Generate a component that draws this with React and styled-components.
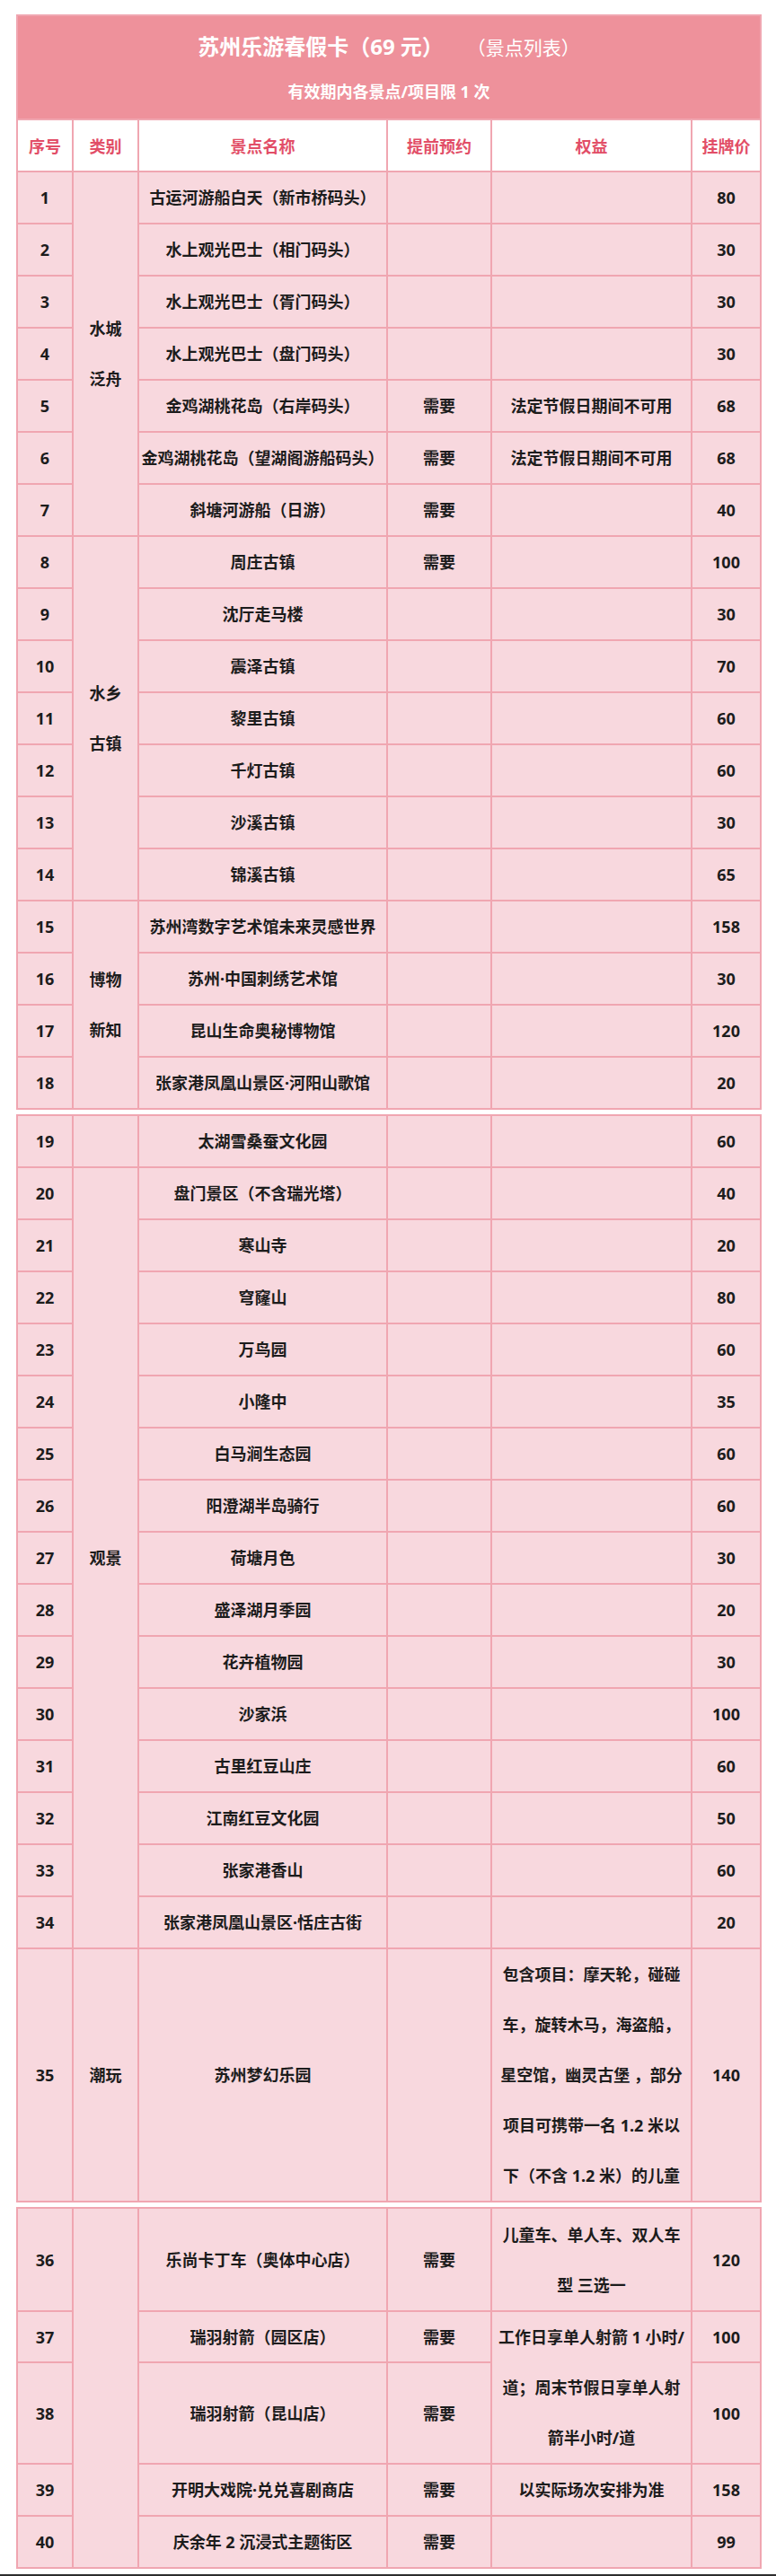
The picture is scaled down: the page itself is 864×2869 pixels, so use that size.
import styled, { createGlobalStyle } from 'styled-components'

const blocoUm = [
    { n: 1, cat: ["水城", "泛舟"], span: 7, nome: "古运河游船白天（新市桥码头）", preco: 80 },
    { n: 2, nome: "水上观光巴士（相门码头）", preco: 30 },
    { n: 3, nome: "水上观光巴士（胥门码头）", preco: 30 },
    { n: 4, nome: "水上观光巴士（盘门码头）", preco: 30 },
    { n: 5, nome: "金鸡湖桃花岛（右岸码头）", reserva: "需要", direito: ["法定节假日期间不可用"], preco: 68 },
    { n: 6, nome: "金鸡湖桃花岛（望湖阁游船码头）", reserva: "需要", direito: ["法定节假日期间不可用"], preco: 68 },
    { n: 7, nome: "斜塘河游船（日游）", reserva: "需要", preco: 40 },
    { n: 8, cat: ["水乡", "古镇"], span: 7, nome: "周庄古镇", reserva: "需要", preco: 100 },
    { n: 9, nome: "沈厅走马楼", preco: 30 },
    { n: 10, nome: "震泽古镇", preco: 70 },
    { n: 11, nome: "黎里古镇", preco: 60 },
    { n: 12, nome: "千灯古镇", preco: 60 },
    { n: 13, nome: "沙溪古镇", preco: 30 },
    { n: 14, nome: "锦溪古镇", preco: 65 },
    { n: 15, cat: ["博物", "新知"], span: 4, nome: "苏州湾数字艺术馆未来灵感世界", preco: 158 },
    { n: 16, nome: "苏州·中国刺绣艺术馆", preco: 30 },
    { n: 17, nome: "昆山生命奥秘博物馆", preco: 120 },
    { n: 18, nome: "张家港凤凰山景区·河阳山歌馆", preco: 20 },
]

const blocoDois = [
    { n: 19, cat: [], span: 1, nome: "太湖雪桑蚕文化园", preco: 60 },
    { n: 20, cat: ["观景"], span: 15, nome: "盘门景区（不含瑞光塔）", preco: 40 },
    { n: 21, nome: "寒山寺", preco: 20 },
    { n: 22, nome: "穹窿山", preco: 80 },
    { n: 23, nome: "万鸟园", preco: 60 },
    { n: 24, nome: "小隆中", preco: 35 },
    { n: 25, nome: "白马涧生态园", preco: 60 },
    { n: 26, nome: "阳澄湖半岛骑行", preco: 60 },
    { n: 27, nome: "荷塘月色", preco: 30 },
    { n: 28, nome: "盛泽湖月季园", preco: 20 },
    { n: 29, nome: "花卉植物园", preco: 30 },
    { n: 30, nome: "沙家浜", preco: 100 },
    { n: 31, nome: "古里红豆山庄", preco: 60 },
    { n: 32, nome: "江南红豆文化园", preco: 50 },
    { n: 33, nome: "张家港香山", preco: 60 },
    { n: 34, nome: "张家港凤凰山景区·恬庄古街", preco: 20 },
    {
        n: 35, cat: ["潮玩"], span: 1, nome: "苏州梦幻乐园", altura: 282, preco: 140,
        direito: ["包含项目：摩天轮，碰碰", "车，旋转木马，海盗船，", "星空馆，幽灵古堡 ，部分", "项目可携带一名 1.2 米以", "下（不含 1.2 米）的儿童"],
    },
]

const blocoTres = [
    { n: 36, cat: [], span: 5, nome: "乐尚卡丁车（奥体中心店）", reserva: "需要", altura: 115, direito: ["儿童车、单人车、双人车", "型 三选一"], preco: 120 },
    { n: 37, nome: "瑞羽射箭（园区店）", reserva: "需要", altura: 57, direito: ["工作日享单人射箭 1 小时/", "道；周末节假日享单人射", "箭半小时/道"], dSpan: 2, preco: 100 },
    { n: 38, nome: "瑞羽射箭（昆山店）", reserva: "需要", altura: 113, pulaDireito: true, preco: 100 },
    { n: 39, nome: "开明大戏院·兑兑喜剧商店", reserva: "需要", altura: 57, direito: ["以实际场次安排为准"], preco: 158 },
    { n: 40, nome: "庆余年 2 沉浸式主题街区", reserva: "需要", altura: 58, preco: 99 },
]

function Colunas() {
    return (
        <colgroup>
            <col style={{ width: 62 }} />
            <col style={{ width: 73 }} />
            <col style={{ width: 277 }} />
            <col style={{ width: 116 }} />
            <col style={{ width: 223 }} />
            <col style={{ width: 77 }} />
        </colgroup>
    )
}

function Linhas({ text }) {
    return text.map((t, i) => (
        <span key={i}>{i > 0 && <br />}{t}</span>
    ))
}

function Linha({ item }) {
    return (
        <Row $h={item.altura || 58}>
            <Cell>{item.n}</Cell>
            {item.cat && (
                <Cell rowSpan={item.span} $multi>
                    <Linhas text={item.cat} />
                </Cell>
            )}
            <Cell>{item.nome}</Cell>
            <Cell>{item.reserva || ""}</Cell>
            {!item.pulaDireito && (
                <Cell rowSpan={item.dSpan || 1} $multi $pad>
                    <Linhas text={item.direito || []} />
                </Cell>
            )}
            <Cell>{item.preco}</Cell>
        </Row>
    )
}

export default function App() {
    return (
        <Pagina>
            <Global />
            <Bloco>
                <Colunas />
                <thead>
                    <tr>
                        <Titulo colSpan={6}>
                            <TituloLinha>
                                <strong>苏州乐游春假卡（69 元）</strong>
                                <span>（景点列表）</span>
                            </TituloLinha>
                            <Subtitulo>有效期内各景点/项目限 1 次</Subtitulo>
                        </Titulo>
                    </tr>
                    <Row $h={58}>
                        <HeadCell>序号</HeadCell>
                        <HeadCell>类别</HeadCell>
                        <HeadCell>景点名称</HeadCell>
                        <HeadCell>提前预约</HeadCell>
                        <HeadCell>权益</HeadCell>
                        <HeadCell>挂牌价</HeadCell>
                    </Row>
                </thead>
                <tbody>
                    {blocoUm.map(item => <Linha key={item.n} item={item} />)}
                </tbody>
            </Bloco>

            <Bloco $gap>
                <Colunas />
                <tbody>
                    {blocoDois.map(item => <Linha key={item.n} item={item} />)}
                </tbody>
            </Bloco>

            <Bloco $gap>
                <Colunas />
                <tbody>
                    {blocoTres.map(item => <Linha key={item.n} item={item} />)}
                </tbody>
            </Bloco>
        </Pagina>
    )
}

const Global = createGlobalStyle`
    body {
        margin: 0;
        background: #FFFFFF;
        font-family: "Noto Sans", "Noto Sans CJK SC", sans-serif;
    }
`

const Pagina = styled.div`
    width: 864px;
    height: 2869px;
    box-sizing: border-box;
    padding: 16px 18px 0 18px;

    border-bottom: 2px solid #2E2E2E;
    background: #FFFFFF;
`

const Bloco = styled.table`
    width: 828px;
    margin-top: ${props => props.$gap ? "5px" : "0"};

    table-layout: fixed;
    border-collapse: collapse;

    background: #F8D8DE;
`

const Row = styled.tr`
    height: ${props => props.$h}px;
`

const Cell = styled.td`
    padding: ${props => props.$pad ? "0 6px" : "0"};

    border: 2px solid #F0A6B1;

    text-align: center;
    vertical-align: middle;

    font-size: 18px;
    font-weight: 700;
    line-height: ${props => props.$multi ? "56px" : "24px"};
    color: #1C1C1C;
    white-space: nowrap;
`

const HeadCell = styled.th`
    padding: 0;

    border: 2px solid #F0A6B1;

    background: #FFFFFF;

    font-size: 18px;
    font-weight: 700;
    color: #E24E67;
`

const Titulo = styled.th`
    height: 114px;
    padding: 0;

    border: 2px solid #F0A6B1;

    background: #EE919B;
    color: #FFFFFF;
`

const TituloLinha = styled.div`
    display: flex;
    justify-content: center;
    align-items: baseline;
    gap: 26px;

    line-height: 36px;

    strong {
        font-size: 24px;
        font-weight: 700;
    }

    span {
        font-size: 21px;
        font-weight: 400;
    }
`

const Subtitulo = styled.div`
    margin-top: 17px;

    font-size: 18px;
    font-weight: 700;
    line-height: 28px;
`
